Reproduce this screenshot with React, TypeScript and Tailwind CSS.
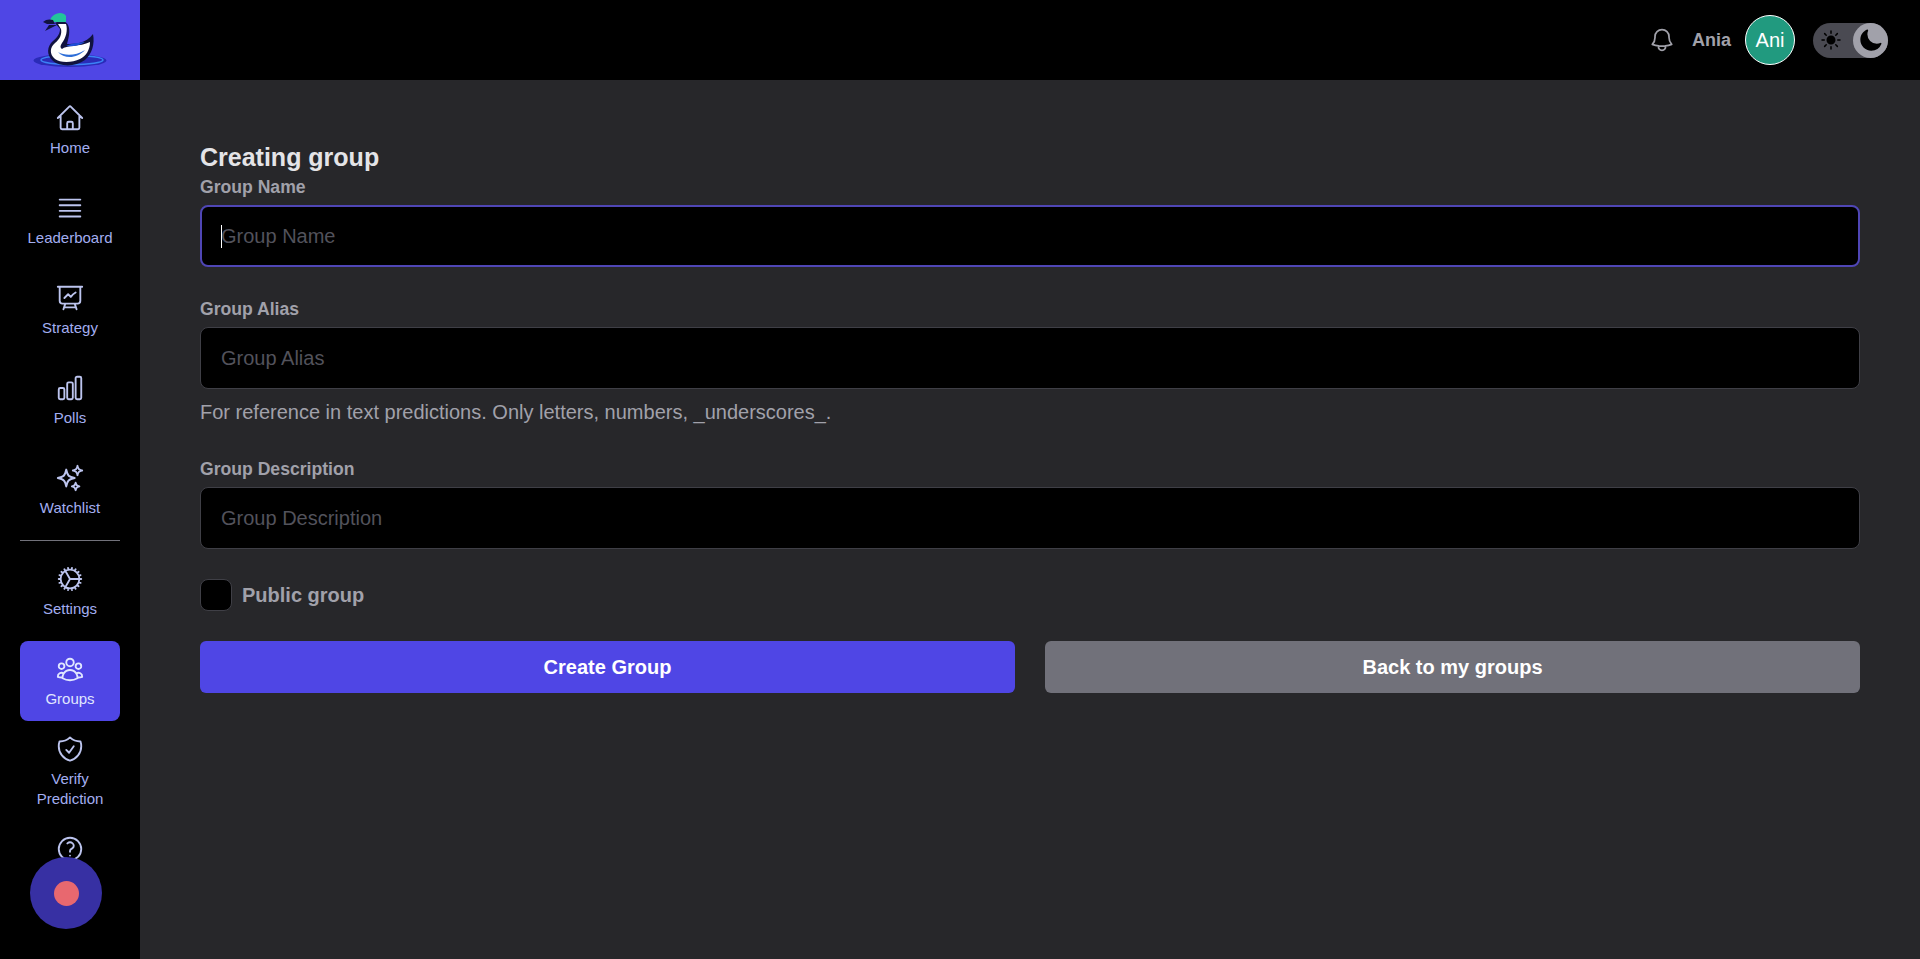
import {
  HiOutlineBars4,
  HiOutlineBell,
  HiOutlineChartBar,
  HiOutlineCog,
  HiOutlineHome,
  HiOutlinePresentationChartLine,
  HiOutlineQuestionMarkCircle,
  HiOutlineShieldCheck,
  HiOutlineSparkles,
  HiOutlineUserGroup,
  HiMoon,
  HiSun,
} from 'react-icons/hi2';
import type { ComponentType } from 'react';

interface NavItemProps {
  label: string;
  icon: ComponentType<{ size?: number; className?: string }>;
  active?: boolean;
}

function NavItem({ label, icon: Icon, active }: NavItemProps) {
  return (
    <a
      className={`flex min-h-[80px] w-[100px] flex-col items-center rounded-lg pt-[13px] text-center text-[15px] leading-[20px] ${
        active ? 'bg-[#4f46e5] text-[#e0e7ff]' : 'text-[#a3aef0]'
      }`}
    >
      <Icon size={30} className={active ? 'text-[#e0e7ff]' : 'text-[#bcc4ee]'} />
      <span className="mt-[5px]">{label}</span>
    </a>
  );
}

function SwanLogo() {
  return (
    <svg width="140" height="80" viewBox="0 0 140 80">
      <ellipse cx="70" cy="60.5" rx="36.5" ry="6.5" fill="#2a2bb8" />
      <ellipse cx="72" cy="60" rx="31" ry="4.5" fill="none" stroke="#3b82f6" strokeWidth="1.5" />
      <path
        d="M55 23 C60 20 68 20 69 28 C70 34 68 40 67 44 C74 44 86 44 93 34 C95 44 92 54 85 60 C76 67 60 67 53 61 C46 55 47 46 53 41 C58 37 60 33 60 29 Z"
        fill="#11133f"
      />
      <path
        d="M58 24 L66 24 C68 30 66 38 62 43 C60 46 60 48 62 49 C66 45 80 47 90 42 C90 50 86 56 80 59 C72 63 60 63 55 59 C49 54 50 47 55 43 C60 39 62 34 61 29 Z"
        fill="#ffffff"
      />
      <path d="M58 52 C65 56 75 56 85 50 C77 59 64 59 58 52 Z" fill="#2f6fd8" />
      <path d="M66 46 C72 43 78 43 85 42 C79 46 72 47 66 46 Z" fill="#1d4ed8" />
      <path d="M50 22 C50 14 62 10 66 16 L66 22 Z" fill="#22c59a" />
      <path d="M43 22 C46 19 50 19 53 20 L55 24 L47 24 Z" fill="#11133f" />
      <path d="M49 25 L57 25 L45 31 Z" fill="#11133f" />
    </svg>
  );
}

function Field({ label, focused }: { label: string; focused?: boolean }) {
  return (
    <div>
      <label className="block text-[17.6px] font-bold leading-[24px] text-[#a1a1aa]">{label}</label>
      <div className="relative mt-[6px]">
        <input
          placeholder={label}
          className={`block h-[62px] w-full rounded-lg border bg-black px-5 text-[20px] text-white outline-none placeholder:text-[#52525b] ${
            focused ? 'border-2 border-[#4f46b5] px-[19px]' : 'border-[#3f3f46]'
          }`}
        />
        {/* caret of the focused input */}
        {focused && <span className="absolute left-[21px] top-[20px] h-[23px] w-px bg-white" />}
      </div>
    </div>
  );
}

export default function App() {
  return (
    <div className="flex h-[959px] overflow-hidden bg-[#27272a] font-['Liberation_Sans',Arial,sans-serif]">
      <aside className="relative flex w-[140px] shrink-0 flex-col items-center overflow-hidden bg-black">
        <div className="h-[80px] w-full shrink-0 bg-[#4f46e5]">
          <SwanLogo />
        </div>
        <nav className="flex flex-col items-center pt-[10px]">
          <div className="flex flex-col gap-[10px]">
            <NavItem label="Home" icon={HiOutlineHome} />
            <NavItem label="Leaderboard" icon={HiOutlineBars4} />
            <NavItem label="Strategy" icon={HiOutlinePresentationChartLine} />
            <NavItem label="Polls" icon={HiOutlineChartBar} />
            <NavItem label="Watchlist" icon={HiOutlineSparkles} />
          </div>
          <hr className="mt-[10px] mb-[10px] w-[100px] border-t border-[#71717a]" />
          <div className="flex flex-col gap-[10px]">
            <NavItem label="Settings" icon={HiOutlineCog} />
            <NavItem label="Groups" icon={HiOutlineUserGroup} active />
          </div>
          <div className="flex flex-col gap-[12px]">
            <NavItem label="Verify Prediction" icon={HiOutlineShieldCheck} />
            <NavItem label="Help" icon={HiOutlineQuestionMarkCircle} />
          </div>
        </nav>
        <div className="absolute left-[30px] top-[857px] flex h-[72px] w-[72px] items-center justify-center rounded-full bg-[#3730a3]">
          <span className="h-[25px] w-[25px] rounded-full bg-[#e8686f]" />
        </div>
      </aside>

      <div className="flex min-w-0 flex-1 flex-col">
        <header className="flex h-[80px] shrink-0 items-center justify-end bg-black pr-[32px]">
          <HiOutlineBell size={28} className="text-[#a1a1aa]" />
          <span className="ml-[16px] text-[18px] font-bold text-[#a1a1aa]">Ania</span>
          <div className="ml-[14px] flex h-[50px] w-[50px] items-center justify-center rounded-full border border-white bg-[#219a7f] text-[20px] text-white">
            Ani
          </div>
          <div className="relative ml-[18px] flex h-[35px] w-[75px] items-center rounded-full bg-[#4a4a52] pl-[6px]">
            <HiSun size={24} className="text-black" />
            <div className="absolute right-0 top-0 flex h-[35px] w-[35px] items-center justify-center rounded-full bg-[#a1a1aa]">
              <HiMoon size={25} className="text-black" />
            </div>
          </div>
        </header>

        <main className="flex-1 pl-[60px] pr-[60px] pt-[62px]">
          <h1 className="text-[25px] font-bold leading-[30px] text-[#e4e4e7]">Creating group</h1>
          <div className="mt-[3px]">
            <Field label="Group Name" focused />
          </div>
          <div className="mt-[30px]">
            <Field label="Group Alias" />
            <p className="mt-[11px] text-[20px] leading-[24px] text-[#a1a1aa]">
              For reference in text predictions. Only letters, numbers, _underscores_.
            </p>
          </div>
          <div className="mt-[33px]">
            <Field label="Group Description" />
          </div>
          <label className="mt-[30px] flex items-center gap-[10px]">
            <input
              type="checkbox"
              className="h-[32px] w-[32px] appearance-none rounded-lg border border-[#3f3f46] bg-black"
            />
            <span className="text-[20px] font-bold text-[#a1a1aa]">Public group</span>
          </label>
          <div className="mt-[30px] grid grid-cols-2 gap-[30px]">
            <button className="h-[52px] rounded-md bg-[#4f46e5] text-[20px] font-bold text-white">
              Create Group
            </button>
            <button className="h-[52px] rounded-md bg-[#71717a] text-[20px] font-bold text-white">
              Back to my groups
            </button>
          </div>
        </main>
      </div>
    </div>
  );
}
